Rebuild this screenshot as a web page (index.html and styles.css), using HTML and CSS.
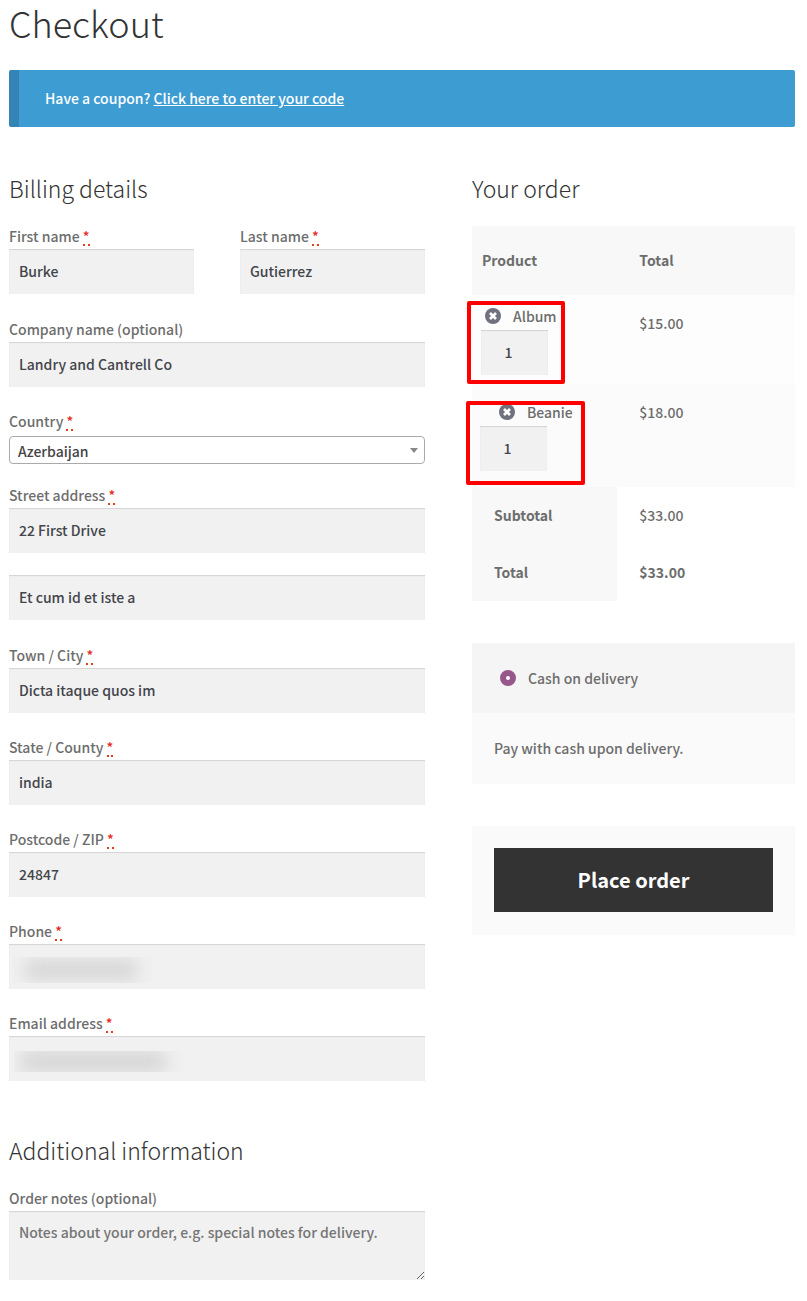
FILE: index.html
```html
<!DOCTYPE html>
<html lang="en">
<head>
<meta charset="utf-8">
<meta name="viewport" content="width=device-width, initial-scale=1">
<title>Checkout</title>
<link rel="stylesheet" href="styles.css">
</head>
<body>
<main class="page">
  <h1 class="page-title">Checkout</h1>
  <div class="notice">Have a coupon? <a href="#coupon">Click here to enter your code</a></div>

  <form class="checkout">
    <div class="customer">
      <section>
        <h2 class="section-title">Billing details</h2>
        <div class="name-row">
          <div class="field">
            <label for="first-name">First name <abbr title="required">*</abbr></label>
            <input class="control" id="first-name" type="text" value="Burke">
          </div>
          <div class="field">
            <label for="last-name">Last name <abbr title="required">*</abbr></label>
            <input class="control" id="last-name" type="text" value="Gutierrez">
          </div>
        </div>
        <div class="field">
          <label for="company">Company name (optional)</label>
          <input class="control" id="company" type="text" value="Landry and Cantrell Co">
        </div>
        <div class="field field-select">
          <label for="country">Country <abbr title="required">*</abbr></label>
          <div class="select-wrap">
            <select class="select" id="country"><option>Azerbaijan</option></select>
            <svg class="select-arrow" viewBox="0 0 8 5" aria-hidden="true"><path d="M0 0h8L4 5z" fill="#888"/></svg>
          </div>
        </div>
        <div class="field">
          <label for="street">Street address <abbr title="required">*</abbr></label>
          <input class="control" id="street" type="text" value="22 First Drive">
        </div>
        <div class="field field-last-line">
          <input class="control" type="text" aria-label="Apartment, suite, unit" value="Et cum id et iste a">
        </div>
        <div class="field">
          <label for="city">Town / City <abbr title="required">*</abbr></label>
          <input class="control" id="city" type="text" value="Dicta itaque quos im">
        </div>
        <div class="field">
          <label for="state">State / County <abbr title="required">*</abbr></label>
          <input class="control" id="state" type="text" value="india">
        </div>
        <div class="field">
          <label for="postcode">Postcode / ZIP <abbr title="required">*</abbr></label>
          <input class="control" id="postcode" type="text" value="24847">
        </div>
        <div class="field">
          <label for="phone">Phone <abbr title="required">*</abbr></label>
          <div class="masked">
            <input class="control" id="phone" type="tel">
            <span class="mask mask-phone"></span>
          </div>
        </div>
        <div class="field">
          <label for="email">Email address <abbr title="required">*</abbr></label>
          <div class="masked">
            <input class="control" id="email" type="email">
            <span class="mask mask-email"></span>
          </div>
        </div>
      </section>

      <section class="additional">
        <h2 class="section-title">Additional information</h2>
        <div class="field">
          <label for="notes">Order notes (optional)</label>
          <textarea class="control notes" id="notes" placeholder="Notes about your order, e.g. special notes for delivery."></textarea>
        </div>
      </section>
    </div>

    <section class="order">
      <h2 class="section-title">Your order</h2>
      <table class="order-table">
        <thead>
          <tr><th scope="col">Product</th><th scope="col">Total</th></tr>
        </thead>
        <tbody>
          <tr class="item">
            <td>
              <div class="product marked">
                <div class="product-name">
                  <button class="remove" type="button" aria-label="Remove Album"><svg viewBox="0 0 16 16" aria-hidden="true"><circle cx="8" cy="8" r="8" fill="#6f717e"/><path d="M5 5l6 6M11 5l-6 6" stroke="#fff" stroke-width="2.7"/></svg></button>
                  <span>Album</span>
                </div>
                <input class="control qty" type="text" inputmode="numeric" aria-label="Album quantity" value="1">
              </div>
            </td>
            <td>$15.00</td>
          </tr>
          <tr class="item item-alt">
            <td>
              <div class="product marked">
                <div class="product-name">
                  <button class="remove" type="button" aria-label="Remove Beanie"><svg viewBox="0 0 16 16" aria-hidden="true"><circle cx="8" cy="8" r="8" fill="#6f717e"/><path d="M5 5l6 6M11 5l-6 6" stroke="#fff" stroke-width="2.7"/></svg></button>
                  <span>Beanie</span>
                </div>
                <input class="control qty" type="text" inputmode="numeric" aria-label="Beanie quantity" value="1">
              </div>
            </td>
            <td>$18.00</td>
          </tr>
        </tbody>
        <tfoot>
          <tr><th scope="row">Subtotal</th><td>$33.00</td></tr>
          <tr><th scope="row">Total</th><td><strong>$33.00</strong></td></tr>
        </tfoot>
      </table>

      <div class="payment">
        <label class="method" for="cod"><input class="radio" id="cod" type="radio" name="payment" checked>Cash on delivery</label>
        <p class="method-info">Pay with cash upon delivery.</p>
      </div>
      <div class="submit">
        <button class="place-order" type="submit">Place order</button>
      </div>
    </section>
  </form>
</main>
</body>
</html>
```

FILE: styles.css
```css
* {
  box-sizing: border-box;
}

body {
  margin: 0;
  background: #fff;
  color: #6d6d6d;
  font-family: "Noto Sans CJK SC", "Noto Sans CJK JP", sans-serif;
  font-size: 14px;
  font-weight: 500;
  line-height: 26px;
}

input,
select,
textarea,
button {
  font: inherit;
  margin: 0;
}

.page {
  padding: 0 12px 20px 9px;
}

.page-title {
  margin: 0 0 26px;
  color: #333;
  font-size: 36px;
  font-weight: 300;
  line-height: 44px;
}

.notice {
  margin-bottom: 43px;
  padding: 15px 24px 16px 26px;
  border-left: 10px solid #3485b5;
  border-radius: 2px;
  background: #3d9cd2;
  color: #fff;
}

.notice a {
  color: #fff;
}

.checkout {
  display: grid;
  grid-template-columns: minmax(0, 416fr) minmax(0, 323fr);
  column-gap: 47px;
  align-items: start;
}

.section-title {
  margin: 0 0 18px;
  color: #333;
  font-size: 23px;
  font-weight: 300;
  line-height: 36px;
}

.name-row {
  display: grid;
  grid-template-columns: 1fr 1fr;
  column-gap: 46px;
  padding-bottom: 1px;
}

.field {
  margin-bottom: 22px;
}

.field label {
  display: block;
  line-height: 25px;
}

.field abbr {
  display: inline-block;
  border-bottom: 2px dotted #e2401c;
  color: #e42a22;
  line-height: 15px;
  text-decoration: none;
}

.control {
  display: block;
  width: 100%;
  height: 45px;
  padding: 8px 10px 10px;
  border: 0;
  border-radius: 0;
  outline: 0;
  background: #f1f1f1;
  box-shadow: inset 0 1px 1px rgba(0, 0, 0, 0.125);
  color: #43454b;
}

.field-select {
  margin-bottom: 19px;
}

.field-last-line {
  margin-bottom: 23px;
}

.select-wrap {
  position: relative;
  padding-top: 2px;
}

.select {
  display: block;
  width: 100%;
  height: 28px;
  padding: 2px 24px 0 8px;
  border: 1px solid #aaa;
  border-radius: 4px;
  appearance: none;
  background: #fff;
  color: #444;
  line-height: 24px;
}

.select-arrow {
  position: absolute;
  right: 7px;
  bottom: 11px;
  width: 8px;
  height: 5px;
}

.masked {
  position: relative;
}

.mask {
  position: absolute;
  top: 13px;
  left: 4px;
  width: 146px;
  height: 26px;
  overflow: hidden;
  pointer-events: none;
}

.mask::before {
  content: "";
  position: absolute;
  inset: 3px 22px 3px 12px;
  background: #d4d4d4;
  filter: blur(9px);
}

.mask-email {
  top: 15px;
  left: 5px;
  width: 176px;
  height: 21px;
}

.mask-email::before {
  inset: 0 24px 0 6px;
}

.additional {
  margin-top: 51px;
}

.notes {
  height: 69px;
  resize: vertical;
}

.notes::placeholder {
  color: #757575;
}

.order-table {
  width: 100%;
  margin: 20px 0 42px;
  border-collapse: collapse;
  table-layout: fixed;
}

.order-table th,
.order-table td {
  padding: 15px 22px 16px;
  text-align: left;
  vertical-align: top;
}

.order-table th {
  background: #f8f8f8;
  font-weight: 700;
}

.order-table thead th {
  padding-top: 21px;
  padding-bottom: 22px;
}

.order-table th:first-child {
  width: 45%;
}

.order-table thead th:first-child {
  padding-left: 10px;
}

.item {
  background: #fdfdfd;
}

.item-alt {
  background: #fbfbfb;
}

.order-table .item td:first-child {
  padding: 8px 9px 9px;
}

.order-table .item-alt td:first-child {
  padding: 15px 8px 16px;
}

.marked {
  position: relative;
  width: max-content;
}

.marked::after {
  content: "";
  position: absolute;
  inset: -2px -8px -9px -14px;
  border: 4px solid #f00;
  border-radius: 2px;
  pointer-events: none;
}

.item-alt .marked::after {
  inset: 2px -12px -14px -14px;
}

.product-name {
  display: flex;
  align-items: center;
  gap: 12px;
  padding: 0 0 1px 4px;
}

.item-alt .product-name {
  padding-left: 19px;
}

.remove {
  display: block;
  width: 16px;
  height: 16px;
  padding: 0;
  border: 0;
  background: none;
}

.remove svg {
  display: block;
}

.qty {
  width: 67px;
  text-align: center;
  padding-right: 22px;
  padding-left: 10px;
}

.payment {
  margin-bottom: 42px;
  background: #fafafa;
}

.method {
  display: flex;
  align-items: center;
  gap: 12px;
  padding: 22px 28px;
  background: #f5f5f5;
}

.radio {
  width: 16px;
  height: 16px;
  border: 6px solid #96588a;
  border-radius: 50%;
  appearance: none;
  background: #fff;
}

.method-info {
  margin: 0;
  padding: 22px 22px 23px;
}

.submit {
  padding: 22px 22px 23px;
  background: #fafafa;
}

.place-order {
  display: block;
  width: 100%;
  padding: 19px;
  border: 0;
  background: #333;
  color: #fff;
  font-size: 20px;
  font-weight: 700;
}
```
